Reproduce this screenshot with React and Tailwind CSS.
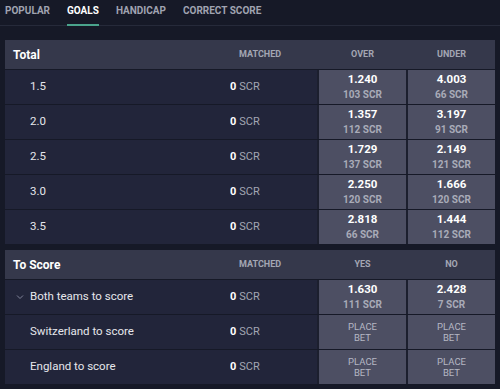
import React from "react";

const totals = [
  { line: "1.5", over: ["1.240", "103 SCR"], under: ["4.003", "66 SCR"] },
  { line: "2.0", over: ["1.357", "112 SCR"], under: ["3.197", "91 SCR"] },
  { line: "2.5", over: ["1.729", "137 SCR"], under: ["2.149", "121 SCR"] },
  { line: "3.0", over: ["2.250", "120 SCR"], under: ["1.666", "120 SCR"] },
  { line: "3.5", over: ["2.818", "66 SCR"], under: ["1.444", "112 SCR"] },
];

const toScore = [
  { label: "Both teams to score", chevron: true, yes: ["1.630", "111 SCR"], no: ["2.428", "7 SCR"] },
  { label: "Switzerland to score", yes: null, no: null },
  { label: "England to score", yes: null, no: null },
];

const tabs = ["POPULAR", "GOALS", "HANDICAP", "CORRECT SCORE"];

const OddsCell = ({ odds }) => (
  <div className="w-[87px] h-full bg-[#4d4f63] flex flex-col items-center justify-center leading-none">
    {odds ? (
      <>
        <span className="text-[11.5px] font-bold text-white">{odds[0]}</span>
        <span className="text-[10px] font-bold text-[#a9abb8] mt-[4px]">{odds[1]}</span>
      </>
    ) : (
      <>
        <span className="text-[9.5px] text-[#b5b7c3]">PLACE</span>
        <span className="text-[9.5px] text-[#b5b7c3] mt-[2px]">BET</span>
      </>
    )}
  </div>
);

const Market = ({ title, colA, colB, children }) => (
  <div className="mx-[5px] w-[490px] bg-[#1c1f2e]">
    <div className="h-[29px] bg-[#35384b] flex items-center">
      <div className="w-[225px] pl-[8px] text-[12px] font-bold text-white">{title}</div>
      <div className="w-[89px] pl-[9px] text-[9px] font-bold text-[#a3a6b3]">MATCHED</div>
      <div className="w-[87px] text-center text-[9px] font-bold text-[#a3a6b3]">{colA}</div>
      <div className="w-[2px]" />
      <div className="w-[87px] text-center text-[9px] font-bold text-[#a3a6b3]">{colB}</div>
    </div>
    {children}
  </div>
);

const Row = ({ label, chevron, a, b }) => (
  <div className="h-[35px] border-t border-[#161927] flex">
    <div className="w-[225px] bg-[#22253a] flex items-center pl-[25px] relative">
      {chevron && (
        <svg className="absolute left-[11px] top-[13px]" width="8" height="8" viewBox="0 0 8 8" fill="none">
          <path d="M1 2.5L4 5.5L7 2.5" stroke="#80839a" strokeWidth="1" />
        </svg>
      )}
      <span className="text-[11.5px] text-[#e6e7ec]">{label}</span>
    </div>
    <div className="w-[89px] bg-[#22253a] flex items-center text-[11px] border-r-[2px] border-[#1c1f2e]">
      <span className="font-bold text-white">0</span>
      <span className="text-[#a3a6b3] ml-[3px]">SCR</span>
    </div>
    <OddsCell odds={a} />
    <div className="w-[2px] bg-[#1c1f2e]" />
    <OddsCell odds={b} />
  </div>
);

export default function App() {
  return (
    <div
      className="w-[500px] h-[389px] bg-[#161927] overflow-hidden"
      style={{ fontFamily: "Roboto, 'Liberation Sans', sans-serif" }}
    >
      <div className="h-[26px] border-b border-[#262a3a] flex px-[5px] gap-[17px]">
        {tabs.map((t) => (
          <div
            key={t}
            className={`relative pt-[3px] text-[10px] font-bold ${t === "GOALS" ? "text-white" : "text-[#a0a3b1]"}`}
          >
            {t}
            {t === "GOALS" && (
              <div className="absolute left-0 right-0 bottom-[-1px] h-[2px] bg-[#4aa38c]" />
            )}
          </div>
        ))}
      </div>
      <div className="h-[14px]" />
      <Market title="Total" colA="OVER" colB="UNDER">
        {totals.map((r) => (
          <Row key={r.line} label={r.line} a={r.over} b={r.under} />
        ))}
      </Market>
      <div className="h-[6px]" />
      <Market title="To Score" colA="YES" colB="NO">
        {toScore.map((r) => (
          <Row key={r.label} label={r.label} chevron={r.chevron} a={r.yes} b={r.no} />
        ))}
      </Market>
    </div>
  );
}
